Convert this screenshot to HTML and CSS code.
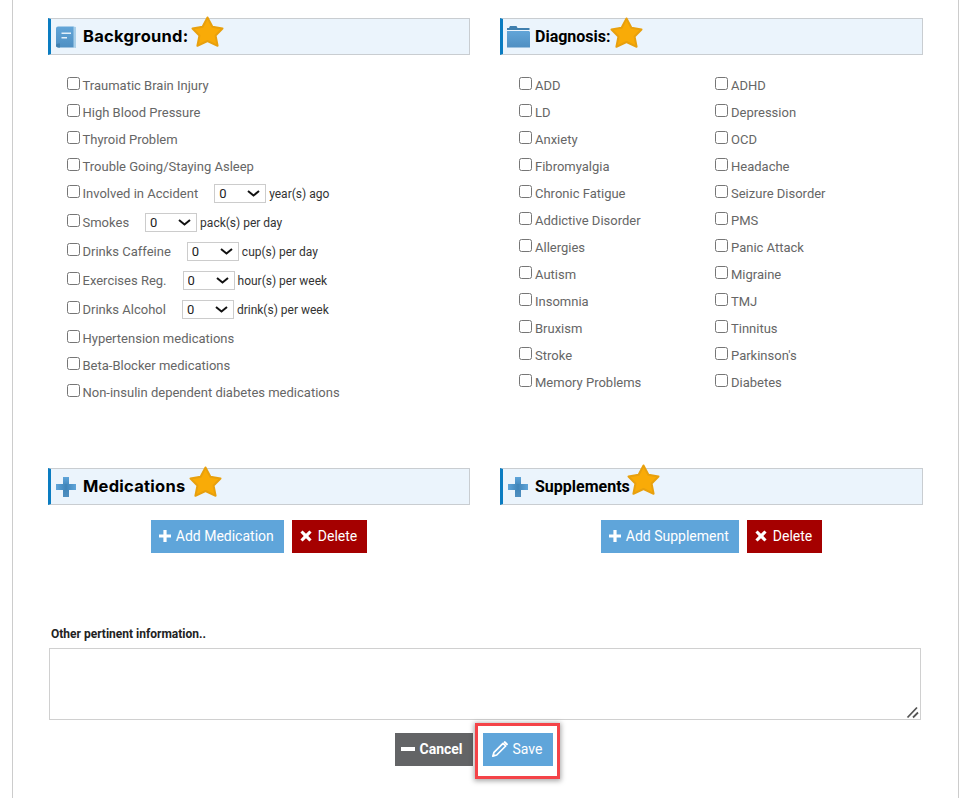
FILE: index.html
```html
<!DOCTYPE html>
<html lang="en">
<head>
<meta charset="utf-8">
<title>Medical History</title>
<link rel="stylesheet" href="styles.css">
</head>
<body>
<svg class="defs" width="0" height="0" aria-hidden="true">
  <defs>
    <symbol id="star" viewBox="0 0 33 32">
      <path d="M16.5 1.500 L21.400 10.800 L31.500 12.500 L24.600 19.600 L26.600 29.800 L16.500 25 L6.400 29.800 L8.400 19.600 L1.500 12.500 L11.600 10.800 Z" fill="#f9ab07" stroke="#e8a00d" stroke-width="2" stroke-linejoin="round"/>
    </symbol>
    <linearGradient id="plusH" x1="0" x2="1" y1="0" y2="0">
      <stop offset="0" stop-color="#5fa5da"/><stop offset=".5" stop-color="#3f84b8"/><stop offset="1" stop-color="#5fa5da"/>
    </linearGradient>
    <linearGradient id="plusV" x1="0" x2="0" y1="0" y2="1">
      <stop offset="0" stop-color="#5fa5da"/><stop offset=".5" stop-color="#3f84b8"/><stop offset="1" stop-color="#4f8fc0"/>
    </linearGradient>
    <linearGradient id="blueBody" x1="0" x2="0" y1="0" y2="1">
      <stop offset="0" stop-color="#62a5d8"/><stop offset="1" stop-color="#4f8fc2"/>
    </linearGradient>
    <symbol id="plus-blue" viewBox="0 0 20 20">
      <rect x="7" y="0" width="6" height="20" fill="url(#plusV)"/>
      <rect x="0" y="7" width="20" height="6" fill="url(#plusH)"/>
    </symbol>
    <symbol id="plus-white" viewBox="0 0 12 12">
      <path d="M4.400 0h3.200v4.400H12v3.200H7.600V12H4.400V7.600H0V4.400h4.400z" fill="#fff"/>
    </symbol>
    <symbol id="cross-white" viewBox="0 0 12 12">
      <path d="M2.600.4 6 3.700 9.400.4l2.200 2.200L8.300 6l3.300 3.400-2.200 2.200L6 8.300l-3.400 3.300L.4 9.400 3.700 6 .4 2.600z" fill="#fff"/>
    </symbol>
  </defs>
</svg>

<main class="frame">
  <div class="sections">
    <section>
      <h2 class="bar">
        <svg class="icon-book" viewBox="0 0 20 22" aria-hidden="true">
          <path d="M17 .5 20 1V22l-3-.5z" fill="#a9cfe9"/>
          <path d="M2 .5H17.500V21.500H2.500A2.500 2.500 0 0 1 0 19V2.500A2 2 0 0 1 2 .5z" fill="url(#blueBody)"/>
          <path d="M0 19A2.500 2.500 0 0 1 2.500 17.500H4V21.500H2.500A2.500 2.500 0 0 1 0 19z" fill="#3f7fae"/>
          <path d="M5.500 6.500H15V8H5.500zM5.500 11H11V12.500H5.500z" fill="#e3f0fa"/>
        </svg>
        <span class="title-wide">Background:</span>
        <svg class="star star-a"><use href="#star"/></svg>
      </h2>
      <div class="list list-one">
        <label class="row"><input type="checkbox">Traumatic Brain Injury</label>
        <label class="row"><input type="checkbox">High Blood Pressure</label>
        <label class="row"><input type="checkbox">Thyroid Problem</label>
        <label class="row"><input type="checkbox">Trouble Going/Staying Asleep</label>
        <div class="row"><input type="checkbox"><span>Involved in Accident</span><select><option>0</option></select><span class="unit">year(s) ago</span></div>
        <div class="row row-tall"><input type="checkbox"><span>Smokes</span><select><option>0</option></select><span class="unit">pack(s) per day</span></div>
        <div class="row row-tall"><input type="checkbox"><span>Drinks Caffeine</span><select><option>0</option></select><span class="unit">cup(s) per day</span></div>
        <div class="row row-tall"><input type="checkbox"><span>Exercises Reg.</span><select><option>0</option></select><span class="unit">hour(s) per week</span></div>
        <div class="row row-tall"><input type="checkbox"><span>Drinks Alcohol</span><select><option>0</option></select><span class="unit">drink(s) per week</span></div>
        <label class="row row-after"><input type="checkbox">Hypertension medications</label>
        <label class="row"><input type="checkbox">Beta-Blocker medications</label>
        <label class="row"><input type="checkbox">Non-insulin dependent diabetes medications</label>
      </div>
    </section>

    <section>
      <h2 class="bar">
        <svg class="icon-folder" viewBox="0 0 23 22" aria-hidden="true">
          <path d="M2 2 3 0H9.500L10.500 2H22.500V4H0V2z" fill="#3f7fae"/>
          <path d="M0 5H22L23 6V21.500H0z" fill="url(#blueBody)"/>
        </svg>
        <span class="title">Diagnosis:</span>
        <svg class="star star-b"><use href="#star"/></svg>
      </h2>
      <div class="list list-two">
        <label class="row"><input type="checkbox">ADD</label>
        <label class="row"><input type="checkbox">ADHD</label>
        <label class="row"><input type="checkbox">LD</label>
        <label class="row"><input type="checkbox">Depression</label>
        <label class="row"><input type="checkbox">Anxiety</label>
        <label class="row"><input type="checkbox">OCD</label>
        <label class="row"><input type="checkbox">Fibromyalgia</label>
        <label class="row"><input type="checkbox">Headache</label>
        <label class="row"><input type="checkbox">Chronic Fatigue</label>
        <label class="row"><input type="checkbox">Seizure Disorder</label>
        <label class="row"><input type="checkbox">Addictive Disorder</label>
        <label class="row"><input type="checkbox">PMS</label>
        <label class="row"><input type="checkbox">Allergies</label>
        <label class="row"><input type="checkbox">Panic Attack</label>
        <label class="row"><input type="checkbox">Autism</label>
        <label class="row"><input type="checkbox">Migraine</label>
        <label class="row"><input type="checkbox">Insomnia</label>
        <label class="row"><input type="checkbox">TMJ</label>
        <label class="row"><input type="checkbox">Bruxism</label>
        <label class="row"><input type="checkbox">Tinnitus</label>
        <label class="row"><input type="checkbox">Stroke</label>
        <label class="row"><input type="checkbox">Parkinson's</label>
        <label class="row"><input type="checkbox">Memory Problems</label>
        <label class="row"><input type="checkbox">Diabetes</label>
      </div>
    </section>

    <section>
      <h2 class="bar">
        <svg class="icon-plus"><use href="#plus-blue"/></svg>
        <span class="title-wide">Medications</span>
        <svg class="star star-c"><use href="#star"/></svg>
      </h2>
      <div class="actions">
        <button class="btn btn-blue" type="button"><svg class="glyph"><use href="#plus-white"/></svg><span class="btn-text">Add Medication</span></button>
        <button class="btn btn-red" type="button"><svg class="glyph"><use href="#cross-white"/></svg><span class="btn-text">Delete</span></button>
      </div>
    </section>

    <section>
      <h2 class="bar">
        <svg class="icon-plus"><use href="#plus-blue"/></svg>
        <span class="title">Supplements</span>
        <svg class="star star-d"><use href="#star"/></svg>
      </h2>
      <div class="actions">
        <button class="btn btn-blue" type="button"><svg class="glyph"><use href="#plus-white"/></svg><span class="btn-text">Add Supplement</span></button>
        <button class="btn btn-red" type="button"><svg class="glyph"><use href="#cross-white"/></svg><span class="btn-text">Delete</span></button>
      </div>
    </section>
  </div>

  <div class="notes">
    <label class="notes-label" for="notes">Other pertinent information..</label>
    <textarea id="notes"></textarea>
  </div>

  <div class="footer">
    <button class="btn btn-grey" type="button"><span class="minus"></span>Cancel</button>
    <div class="save-wrap">
      <button class="btn btn-blue btn-save" type="button">
        <svg class="pencil" viewBox="0 0 16 16" aria-hidden="true">
          <path d="M.8 15.200 2 11.300 11 2.300 13.700 5 4.700 14Z" fill="none" stroke="#fff" stroke-width="1.700" stroke-linejoin="round"/>
          <path d="M.8 15.200 1.500 12.500 3.500 14.500Z" fill="#fff"/>
          <path d="M12.800 1.200 14.800 3.200" stroke="#fff" stroke-width="2.200" stroke-linecap="round"/>
        </svg>Save</button>
      <span class="highlight"></span>
    </div>
  </div>
</main>
</body>
</html>
```

FILE: styles.css
```css
* { box-sizing: border-box; }

html, body {
  margin: 0;
  height: 100%;
  background: #fff;
}

body {
  font-family: Roboto, "Liberation Sans", sans-serif;
  overflow: hidden;
}

.defs { position: absolute; }

.frame {
  width: 947px;
  height: 798px;
  margin-left: 12px;
  padding: 18px 35px 0;
  border-left: 1px solid #ccc;
  border-right: 1px solid #ccc;
}

.sections {
  display: grid;
  grid-template-columns: 422px 423px;
  column-gap: 30px;
  grid-template-rows: 450px 155px;
}

.bar {
  display: flex;
  align-items: center;
  height: 37px;
  margin: 0;
  padding-left: 5px;
  background: #ebf4fc;
  border: 1px solid #c9cdd1;
  border-left: 3px solid #0a7cc1;
  color: #000;
  font-size: 16px;
  font-weight: 700;
}

.title-wide {
  font-family: Inter, Roboto, sans-serif;
  font-size: 16.5px;
  font-weight: 700;
  margin: 0 0 2px 7px;
  letter-spacing: 0.25px;
}

.title { margin-left: 5px; }
.icon-plus + .title { margin-left: 7px; }

.icon-book { width: 20px; height: 22px; }
.icon-folder { width: 23px; height: 22px; margin-left: -1px; }
.icon-plus { width: 20px; height: 20px; }

.star {
  width: 33px;
  height: 32px;
  flex: none;
  margin-bottom: 10px;
}
.star-a { margin-left: 3px; }
.star-b { margin-left: -1px; margin-bottom: 8px; }
.star-c { margin-left: 4px; }
.star-d { margin-left: -3px; margin-bottom: 14px; }

.list {
  margin-top: 17px;
  padding-left: 19px;
}

.list-two {
  display: grid;
  grid-template-columns: 196px 196px;
}

.row {
  display: flex;
  align-items: center;
  height: 27px;
  font-size: 13px;
  color: #666;
}

.row-tall {
  height: 29px;
  padding-top: 2px;
}
.row-after { margin-top: 2px; }

.row input[type="checkbox"] {
  width: 13px;
  height: 13px;
  margin: 0 3px 5px 0;
  flex: none;
}

.list-one .row input[type="checkbox"] { margin-right: 2.5px; }

.row select {
  appearance: none;
  width: 52px;
  height: 19px;
  margin-left: 16px;
  padding: 0 0 0 4px;
  border: 1px solid #ccc;
  border-radius: 0;
  background: #fff url("data:image/svg+xml,%3Csvg xmlns='http://www.w3.org/2000/svg' width='13' height='7' viewBox='0 0 13 7'%3E%3Cpath d='M1 1l5.500 4.500L12 1' fill='none' stroke='%23111' stroke-width='2'/%3E%3C/svg%3E") no-repeat right 5px center;
  color: #222;
  font-family: Roboto, sans-serif;
  font-size: 13px;
}

.unit {
  margin-left: 3px;
  font-size: 12px;
  color: #333;
}

.actions {
  display: flex;
  justify-content: center;
  gap: 8px;
  margin-top: 15px;
}

.btn {
  display: inline-flex;
  align-items: center;
  height: 33px;
  padding: 0 10px 0 8px;
  border: 0;
  color: #fff;
  font-family: Roboto, sans-serif;
  font-size: 14px;
  white-space: nowrap;
}

.btn-text { margin-bottom: 2px; }

.btn-blue { background: #5fa5da; }
.btn-red { background: #a50000; }
.btn-grey { background: #636466; font-weight: 700; padding: 0 10px 2px 6px; }

.glyph {
  width: 12px;
  height: 12px;
  margin: 0 5px 1px 0;
  flex: none;
}
.btn-red .glyph { margin-right: 6px; }

.notes-label {
  display: block;
  height: 25px;
  padding: 4px 0 0 3px;
  font-size: 12px;
  font-weight: 700;
  color: #222;
}

.notes textarea {
  display: block;
  width: 872px;
  height: 72px;
  margin-left: 1px;
  border: 1px solid #d0d0d0;
  background: #fff;
  outline: 0;
}

.notes textarea::-webkit-resizer {
  background: url("data:image/svg+xml,%3Csvg xmlns='http://www.w3.org/2000/svg' width='15' height='15' viewBox='0 0 15 15'%3E%3Cpath d='M2.500 13.500 12 3.500M8 13.500 13 8.500' fill='none' stroke='%23555' stroke-width='1.800'/%3E%3C/svg%3E") no-repeat;
}

.footer {
  display: flex;
  justify-content: center;
  gap: 10px;
  margin-top: 13px;
  padding-right: 23px;
}

.minus {
  width: 14px;
  height: 4px;
  margin-right: 4px;
  background: #fff;
}

.save-wrap { position: relative; }

.btn-save { padding: 0 10px 2px 9px; }

.pencil {
  width: 16px;
  height: 16px;
  margin-right: 5px;
  flex: none;
}

.highlight {
  position: absolute;
  left: -8px;
  top: -10px;
  width: 85px;
  height: 56px;
  border: 3px solid #f44348;
  box-shadow: 0 1px 5px 1px rgba(0, 0, 0, .35);
  pointer-events: none;
}
```
